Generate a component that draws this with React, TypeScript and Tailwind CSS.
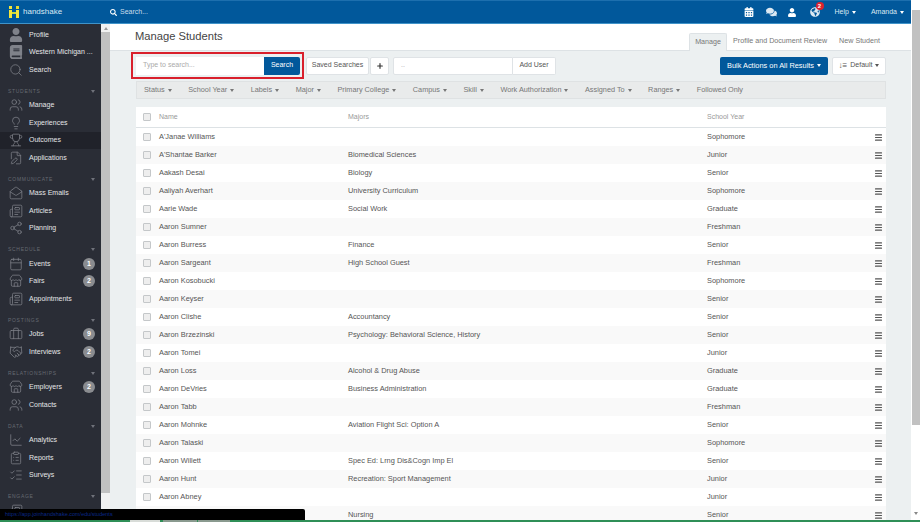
import {
  Search, Users, Lightbulb, Trophy, FileEdit, MailOpen, Newspaper, Share2, Calendar, Store,
  Briefcase, Handshake, ChartLine, ClipboardList, ListChecks, Menu, Plus,
} from 'lucide-react'
import { FaUser, FaBook, FaCalendarAlt, FaComments, FaGlobeAmericas, FaSearch } from 'react-icons/fa'
import type { ComponentType, ReactNode } from 'react'

type NavItem = { label: string; icon: ComponentType<{ className?: string }>; badge?: number; active?: boolean }

const topNav: NavItem[] = [
  { label: 'Profile', icon: FaUser },
  { label: 'Western Michigan ...', icon: FaBook },
  { label: 'Search', icon: Search },
]

const navSections: { title: string; items: NavItem[] }[] = [
  {
    title: 'STUDENTS',
    items: [
      { label: 'Manage', icon: Users },
      { label: 'Experiences', icon: Lightbulb },
      { label: 'Outcomes', icon: Trophy, active: true },
      { label: 'Applications', icon: FileEdit },
    ],
  },
  {
    title: 'COMMUNICATE',
    items: [
      { label: 'Mass Emails', icon: MailOpen },
      { label: 'Articles', icon: Newspaper },
      { label: 'Planning', icon: Share2 },
    ],
  },
  {
    title: 'SCHEDULE',
    items: [
      { label: 'Events', icon: Calendar, badge: 1 },
      { label: 'Fairs', icon: Store, badge: 2 },
      { label: 'Appointments', icon: Newspaper },
    ],
  },
  {
    title: 'POSTINGS',
    items: [
      { label: 'Jobs', icon: Briefcase, badge: 9 },
      { label: 'Interviews', icon: Handshake, badge: 2 },
    ],
  },
  {
    title: 'RELATIONSHIPS',
    items: [
      { label: 'Employers', icon: Store, badge: 2 },
      { label: 'Contacts', icon: Users },
    ],
  },
  {
    title: 'DATA',
    items: [
      { label: 'Analytics', icon: ChartLine },
      { label: 'Reports', icon: ClipboardList },
      { label: 'Surveys', icon: ListChecks },
    ],
  },
  {
    title: 'ENGAGE',
    items: [{ label: '', icon: Newspaper }],
  },
]

const filters = [
  'Status', 'School Year', 'Labels', 'Major', 'Primary College', 'Campus', 'Skill',
  'Work Authorization', 'Assigned To', 'Ranges',
]

const students = [
  ["A'Janae Williams", '', 'Sophomore'],
  ["A'Shantae Barker", 'Biomedical Sciences', 'Junior'],
  ['Aakash Desai', 'Biology', 'Senior'],
  ['Aaliyah Averhart', 'University Curriculum', 'Sophomore'],
  ['Aarie Wade', 'Social Work', 'Graduate'],
  ['Aaron Sumner', '', 'Freshman'],
  ['Aaron Burress', 'Finance', 'Senior'],
  ['Aaron Sargeant', 'High School Guest', 'Freshman'],
  ['Aaron Kosobucki', '', 'Sophomore'],
  ['Aaron Keyser', '', 'Senior'],
  ['Aaron Clishe', 'Accountancy', 'Senior'],
  ['Aaron Brzezinski', 'Psychology: Behavioral Science, History', 'Senior'],
  ['Aaron Tomei', '', 'Junior'],
  ['Aaron Loss', 'Alcohol & Drug Abuse', 'Graduate'],
  ['Aaron DeVries', 'Business Administration', 'Graduate'],
  ['Aaron Tabb', '', 'Freshman'],
  ['Aaron Mohnke', 'Aviation Flight Sci: Option A', 'Senior'],
  ['Aaron Talaski', '', 'Sophomore'],
  ['Aaron Willett', 'Spec Ed: Lrng Dis&Cogn Imp El', 'Senior'],
  ['Aaron Hunt', 'Recreation: Sport Management', 'Junior'],
  ['Aaron Abney', '', 'Junior'],
  ['', 'Nursing', 'Senior'],
]

function Caret({ className = 'border-t-[#777]' }: { className?: string }) {
  return <span className={`inline-block w-0 h-0 border-x-[2.5px] border-x-transparent border-t-[3px] ${className}`} />
}

function Logo() {
  return (
    <svg viewBox="0 0 10 12" className="w-[10px] h-[12px] shrink-0">
      <rect x="0" y="0" width="3" height="3" fill="#f4e63c" />
      <rect x="0" y="4" width="3" height="8" fill="#f4e63c" />
      <rect x="7" y="0" width="3" height="3" fill="#e8d92f" />
      <rect x="7" y="4" width="3" height="8" fill="#f4e63c" />
      <rect x="3" y="6" width="4" height="2" fill="#c8d93a" />
    </svg>
  )
}

function NavRow({ item }: { item: NavItem }) {
  const Icon = item.icon
  return (
    <div className={`h-[17.5px] flex items-center pl-[9px] pr-[6px] ${item.active ? 'bg-[#20222a]' : ''}`}>
      <span className="w-[20px] flex justify-start shrink-0">
        <Icon className="w-[14px] h-[14px] text-[#7f828a] [stroke-width:1.3]" />
      </span>
      {item.label && <span className="flex-1 text-[7px] text-[#e4e5e7] whitespace-nowrap">{item.label}</span>}
      {item.badge && (
        <span className="w-[12px] h-[12px] rounded-full bg-[#8a8c90] text-white text-[7px] font-bold flex items-center justify-center">
          {item.badge}
        </span>
      )}
    </div>
  )
}

function Sidebar() {
  return (
    <aside className="w-[101px] shrink-0 bg-[#2a2d36] overflow-hidden">
      <div className="pt-[2px]">
        {topNav.map((item) => <NavRow key={item.label} item={item} />)}
      </div>
      {navSections.map((section) => (
        <div key={section.title}>
          <div className="h-[18px] flex items-end justify-between pl-[8px] pr-[6px] pb-[2px]">
            <span className="text-[5px] leading-[7px] tracking-[0.7px] text-[#666a72]">{section.title}</span>
            <Caret className="border-t-[#6f727a] mb-[2px]" />
          </div>
          {section.items.map((item) => <NavRow key={item.label || section.title} item={item} />)}
        </div>
      ))}
    </aside>
  )
}

function Button({ children, className = '' }: { children: ReactNode; className?: string }) {
  return (
    <div className={`h-[18px] bg-white rounded-[2px] border border-[#dfe3e6] flex items-center justify-center text-[7px] text-[#555] whitespace-nowrap ${className}`}>
      {children}
    </div>
  )
}

export default function App() {
  return (
    <div className="relative w-[920px] h-[522px] overflow-hidden flex opacity-[0.999] font-['Liberation_Sans',Arial,sans-serif] bg-white">
      <div className="w-[911px] shrink-0 flex flex-col">
        <header className="h-[24px] shrink-0 bg-[#01589b] border-t border-t-[#1d6fae] border-b border-b-[#3f93c9] flex items-center">
          <div className="w-[101px] flex items-center pl-[9px]">
            <Logo />
            <span className="ml-[4px] text-[8px] text-[#d9e8f3]">handshake</span>
          </div>
          <div className="flex-1 flex items-center pl-[9px]">
            <FaSearch className="w-[7px] h-[7px] text-white" />
            <span className="ml-[3px] text-[7px] text-[#c9dcea]">Search...</span>
          </div>
          <div className="flex items-center text-white text-[7px]">
            <FaCalendarAlt className="w-[10px] h-[10px]" />
            <FaComments className="ml-[12px] w-[11px] h-[10px] text-[#dbe8f2]" />
            <FaUser className="ml-[11px] w-[8px] h-[9px]" />
            <span className="relative ml-[14px]">
              <FaGlobeAmericas className="w-[10px] h-[10px] text-[#dbe8f2]" />
              <span className="absolute -top-[5px] left-[6px] w-[8px] h-[8px] rounded-full bg-[#d9232e] text-[6px] font-bold flex items-center justify-center">2</span>
            </span>
            <span className="ml-[15px] flex items-center gap-[3px] text-[#dbe8f2]">Help <Caret className="border-t-white" /></span>
            <span className="ml-[15px] mr-[7px] flex items-center gap-[3px] text-[#dbe8f2]">Amanda <Caret className="border-t-white" /></span>
          </div>
        </header>

        <div className="flex-1 flex min-h-0">
          <Sidebar />
          <div className="w-[9px] shrink-0 bg-[#f1f1f1] flex flex-col">
            <span className="h-[8px] flex items-center justify-center"><span className="w-0 h-0 border-x-[2.5px] border-x-transparent border-b-[3px] border-b-[#999]" /></span>
            <span className="h-[461px] bg-[#c1c1c1]" />
          </div>

          <main className="flex-1 min-w-0 bg-[#ecf0f1]">
            <div className="h-[27px] bg-white border-b border-[#dde2e5] flex items-end justify-between pl-[25px] pr-[31px]">
              <h1 className="self-center text-[11.2px] text-[#444] font-normal leading-none pb-[1px]">Manage Students</h1>
              <div className="flex items-end text-[7.15px] text-[#777]">
                <span className="h-[18px] -mb-px w-[38px] justify-center flex items-center bg-[#ecf0f1] border border-b-0 border-[#dde2e5] rounded-t-[2px]">Manage</span>
                <span className="h-[18px] ml-[6px] flex items-center">Profile and Document Review</span>
                <span className="h-[18px] ml-[12px] flex items-center">New Student</span>
              </div>
            </div>

            <div className="pl-[21px] pr-[25px] flex items-start mt-[1px]">
              <div className="w-[173px] h-[27px] border-[2px] border-[#d9202c] flex items-center pl-[3px] pr-[1px] mr-[2px]">
                <div className="w-[128px] h-[18px] bg-white flex items-center pl-[7px] text-[7px] text-[#aaa]">Type to search...</div>
                <div className="w-[36px] h-[18px] bg-[#01589b] rounded-r-[2px] flex items-center justify-center text-[7px] text-white">Search</div>
              </div>
              <Button className="w-[63px] mt-[4.5px]">Saved Searches</Button>
              <Button className="w-[19px] mt-[4.5px] ml-[1px]"><Plus className="w-[8px] h-[8px] text-[#333]" strokeWidth={3.5} /></Button>
              <div className="ml-[4px] mt-[4.5px] w-[163px] h-[18px] flex">
                <div className="flex-1 bg-white border border-[#dfe3e6] text-[7px] text-[#aaa] pl-[7px] flex items-center rounded-l-[2px]">..</div>
                <Button className="w-[43px] border-l-0 rounded-l-none">Add User</Button>
              </div>
              <div className="flex-1" />
              <div className="mt-[4.5px] w-[108px] h-[18px] rounded-[2px] bg-[#01589b] text-white text-[7.4px] whitespace-nowrap flex items-center justify-center gap-[3px]">
                Bulk Actions on All Results <Caret className="border-t-white" />
              </div>
              <Button className="mt-[4.5px] ml-[4px] w-[54px] gap-[3px] text-[7.4px]">
                <span className="text-[8px] font-bold text-[#555]">↓≡</span> Default <Caret className="border-t-[#555]" />
              </Button>
            </div>

            <div className="ml-[26px] mr-[25px] mt-[2px] h-[18px] bg-[#e9ebeb] border border-[#dfe2e3] flex items-center pl-[7px] text-[7.3px] text-[#777]">
              {filters.map((f) => (
                <span key={f} className="flex items-center gap-[3px] mr-[16.5px] whitespace-nowrap">{f} <Caret /></span>
              ))}
              <span className="whitespace-nowrap">Followed Only</span>
            </div>

            <div className="ml-[26px] mr-[25px] mt-[8px] bg-white">
              <div className="h-[21px] flex items-center border-b border-[#dde2e5] text-[7px] text-[#999]">
                <input type="checkbox" readOnly className="ml-[7px] w-[8px] h-[8px] appearance-none border border-[#c4c7c9] rounded-[1px] bg-[#eeeeee]" />
                <span className="ml-[8px] w-[189px]">Name</span>
                <span className="w-[359px]">Majors</span>
                <span>School Year</span>
              </div>
              {students.map(([name, major, year], i) => (
                <div key={i} className={`h-[18px] flex items-center text-[7.4px] text-[#555] ${i % 2 ? 'bg-[#f9f9f9]' : 'bg-white'}`}>
                  <input type="checkbox" readOnly className="ml-[7px] w-[8px] h-[8px] appearance-none border border-[#c4c7c9] rounded-[1px] bg-[#eeeeee]" />
                  <span className="ml-[8px] w-[189px] whitespace-nowrap">{name}</span>
                  <span className="w-[359px] whitespace-nowrap">{major}</span>
                  <span className="flex-1">{year}</span>
                  <Menu className="w-[9px] h-[9px] mr-[3px] text-[#555]" strokeWidth={3} />
                </div>
              ))}
            </div>
          </main>
        </div>
      </div>

      <div className="w-[9px] shrink-0 bg-white flex flex-col">
        <span className="mt-[10px] ml-[1px] h-[415px] bg-[#c1c1c1]" />
        <span className="mt-[87px] flex justify-center"><Caret className="border-t-[#888]" /></span>
      </div>

      <div className="absolute left-0 bottom-[2px] w-[305px] h-[11px] bg-black rounded-tr-[2px] pl-[5px] text-[5.5px] leading-[11px] text-[#0a2a8a] whitespace-nowrap overflow-hidden">
        https://app.joinhandshake.com/edu/students
      </div>
      <div className="absolute left-0 bottom-0 w-full h-[2px] bg-[#2f8f57] flex">
        <span className="ml-[130px] w-[30px] bg-[#d8dcd8]" />
        <span className="ml-[3px] w-[34px] bg-[#8a9a8f]" />
        <span className="ml-[1px] w-[32px] bg-[#8a9a8f]" />
      </div>
    </div>
  )
}
